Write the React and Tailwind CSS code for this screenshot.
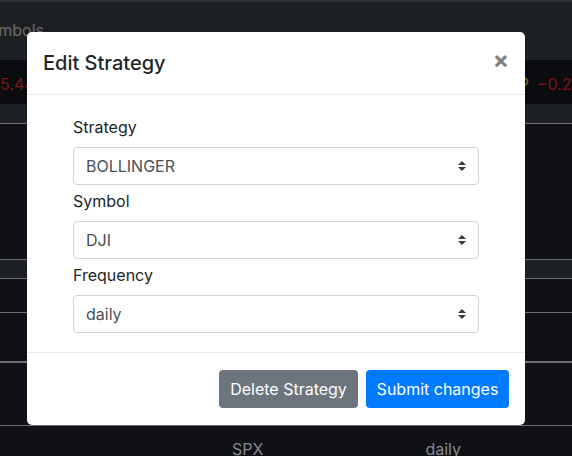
import React from "react";

const font = { fontFamily: "Inter, 'Noto Sans', sans-serif" };

const SelectArrows = () => (
  <svg viewBox="0 0 4 5" className="w-2 h-[10px]" fill="#343a40">
    <path d="M2 0L0 2h4zm0 5L0 3h4z" />
  </svg>
);

const Field = ({ label, value }) => (
  <div className="flex flex-col">
    <label className="text-[16px] leading-6 text-[#212529] mb-2">{label}</label>
    <div className="h-[38px] border border-[#ced4da] rounded-[4px] flex items-center justify-between pl-3 pr-3 text-[16px] text-[#495057]">
      <span>{value}</span>
      <SelectArrows />
    </div>
  </div>
);

const fields = [
  { label: "Strategy", value: "BOLLINGER" },
  { label: "Symbol", value: "DJI" },
  { label: "Frequency", value: "daily" },
];

export default function App() {
  return (
    <div className="relative w-[572px] h-[456px] overflow-hidden bg-[#101117]" style={font}>
      {/* page behind the backdrop */}
      <div className="h-[2px] bg-[#2e2f31]" />
      <div className="h-[58px] bg-[#1d2023] pt-[16px]">
        <span className="block -ml-[21px] text-[16px] leading-6 text-[#6a6d70]">Symbols</span>
      </div>
      <div className="h-[44px] bg-[#0b0c0f] flex items-center justify-between text-[16px] pt-[4px]">
        <span className="text-[#7e1414]">5.44</span>
        <span className="flex gap-[8px]">
          <span className="text-[#8c5b16]">P</span>
          <span className="text-[#7e1414] -mr-[6px]">−0.21</span>
        </span>
      </div>
      <div className="h-[20px] bg-[#1d2023] border-b border-[#6e6e6e]" />
      <div className="h-[136px] border-b border-[#6e6e6e]" />
      <div className="h-[19px] bg-[#1d2023] border-b border-[#6e6e6e]" />
      <div className="h-[34px] border-b border-[#6e6e6e]" />
      <div className="h-[50px] border-b-2 border-[#6e6e6e]" />
      <div className="h-[63px] border-b border-[#6e6e6e]" />
      <div className="flex text-[16px] leading-6 text-[#87898c] pt-[11px]">
        <span className="ml-[232px]">SPX</span>
        <span className="ml-[162px]">daily</span>
      </div>

      {/* modal */}
      <div className="absolute left-[27px] top-[32px] w-[498px] rounded-[5px] bg-white">
        <div className="flex items-center justify-between px-4 py-4 border-b border-[#e9ecef]">
          <h5 className="text-[20px] leading-[30px] font-medium text-[#212529]">Edit Strategy</h5>
          <span className="text-[24px] leading-[30px] font-bold text-[#808080] -mt-[6px]">×</span>
        </div>
        <div className="px-[46px] pt-[20px] pb-[19px] flex flex-col gap-1">
          {fields.map((f) => (
            <Field key={f.label} label={f.label} value={f.value} />
          ))}
        </div>
        <div className="flex justify-end gap-2 px-4 pt-[17px] pb-[17px] border-t border-[#e9ecef]">
          <button className="h-[38px] w-[139px] rounded-[4px] bg-[#6c757d] text-white text-[16px]">
            Delete Strategy
          </button>
          <button className="h-[38px] w-[143px] rounded-[4px] bg-[#007bff] text-white text-[16px]">
            Submit changes
          </button>
        </div>
      </div>
    </div>
  );
}
